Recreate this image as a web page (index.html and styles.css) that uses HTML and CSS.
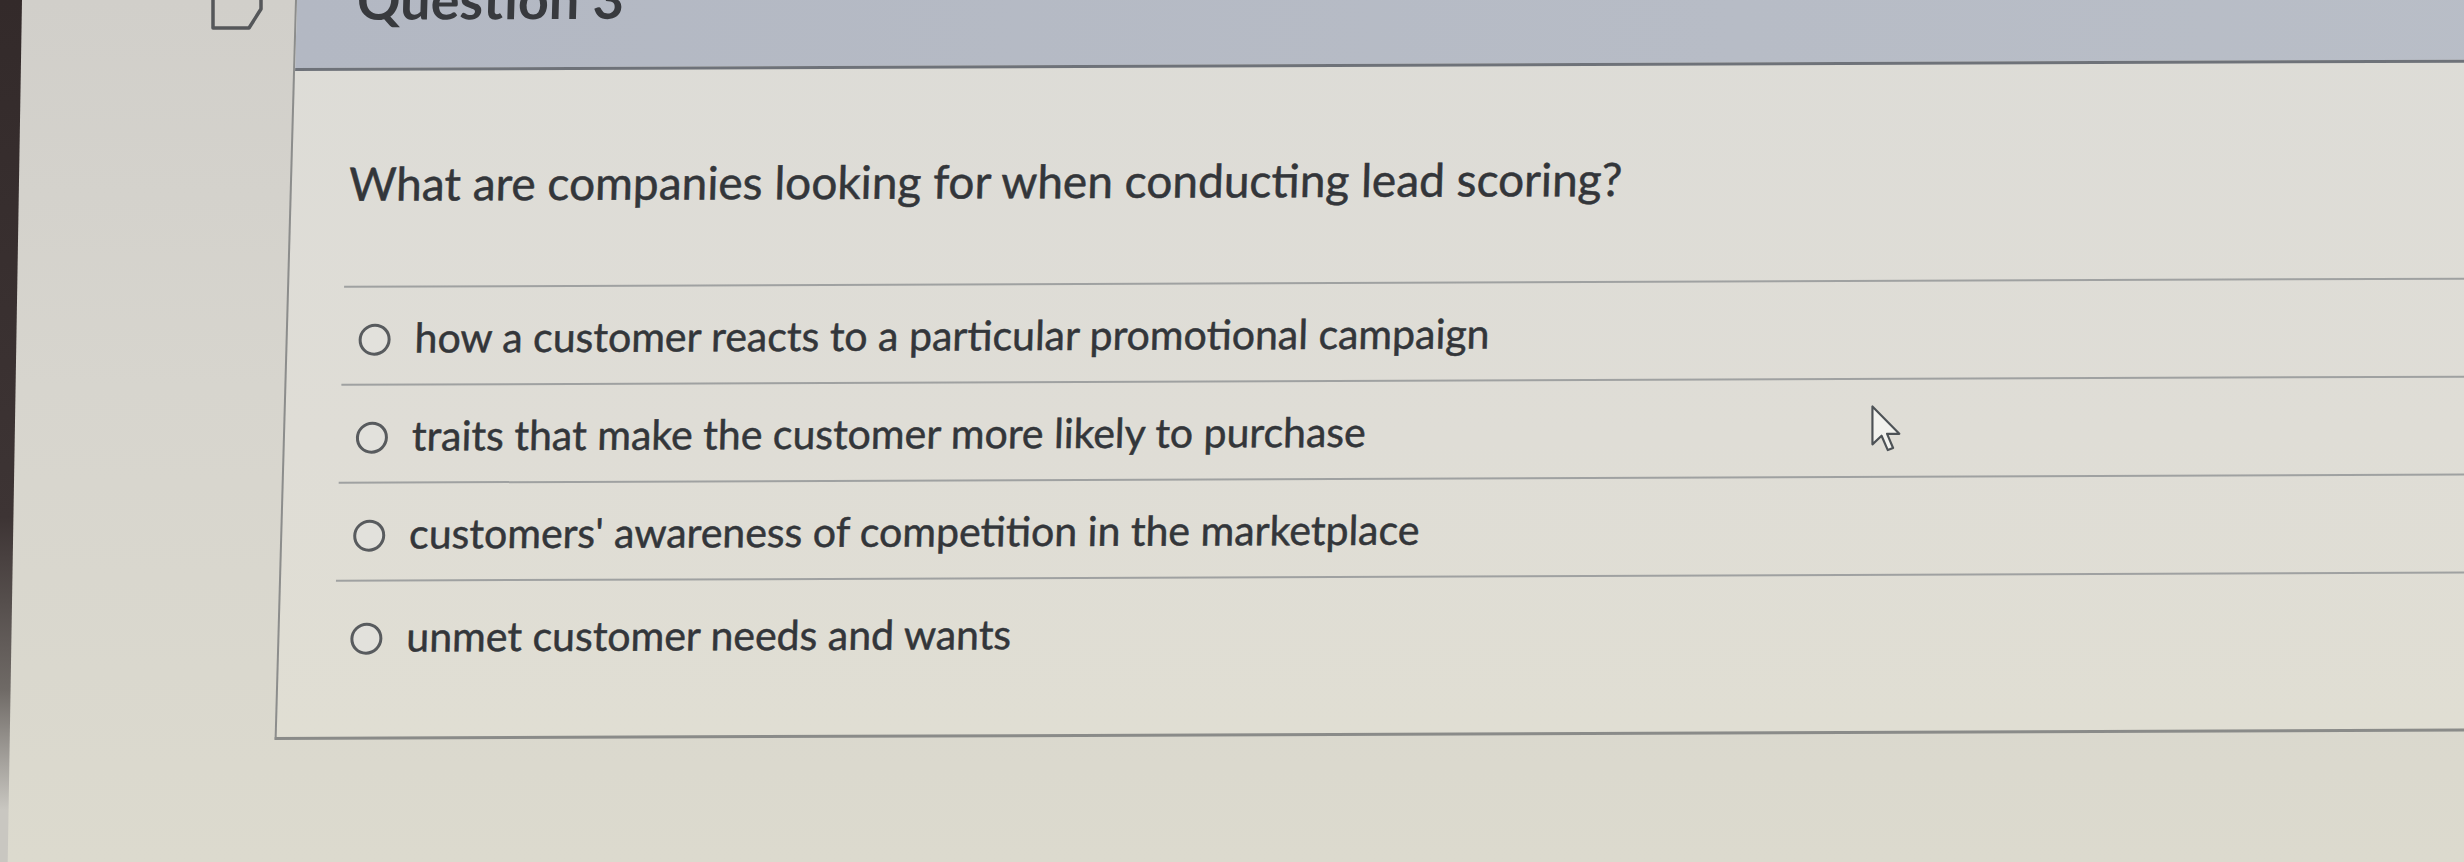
FILE: index.html
```html
<!DOCTYPE html>
<html lang="en">
<head>
<meta charset="utf-8">
<title>Question 3</title>
<link rel="stylesheet" href="styles.css">
</head>
<body>
<div class="screen">
  <div class="edge"></div>
  <aside class="sidebar">
    <svg class="flag" width="60" height="32" viewBox="0 0 60 32" aria-hidden="true">
      <path d="M3 -10 V28 H39 L51 9 V-10" fill="none" stroke="#55575a" stroke-width="3.5" stroke-linejoin="round"/>
    </svg>
  </aside>
  <main class="panel">
    <header class="qheader">
      <h2 class="qname">Question 3</h2>
    </header>
    <section class="qbody">
      <p class="qtext">What are companies looking for when conducting lead scoring?</p>
      <div class="answers">
        <label class="answer"><span class="radio"></span><span class="atext">how a customer reacts to a particular promotional campaign</span></label>
        <label class="answer"><span class="radio"></span><span class="atext">traits that make the customer more likely to purchase</span></label>
        <label class="answer"><span class="radio"></span><span class="atext">customers' awareness of competition in the marketplace</span></label>
        <label class="answer last"><span class="radio"></span><span class="atext">unmet customer needs and wants</span></label>
      </div>
    </section>
  </main>
</div>
<svg class="cursor" width="30" height="48" viewBox="0 0 12.5 20" aria-hidden="true">
  <path d="M0.6 0.6 V16.4 L4.4 12.8 L7 18.8 L9.2 17.9 L6.7 12 H11.8 Z" fill="#f2f2ee" stroke="#4d5256" stroke-width="0.9" stroke-linejoin="round"/>
</svg>
</body>
</html>
```
FILE: styles.css
```css
html, body {
  margin: 0;
  padding: 0;
  width: 2464px;
  height: 862px;
  overflow: hidden;
}
body {
  background: linear-gradient(180deg, #d1cfca 0%, #d7d5ce 45%, #dcdace 100%);
  font-family: Lato, "Open Sans", "Liberation Sans", sans-serif;
  color: #33363a;
  position: relative;
}
.screen {
  display: flex;
  height: 862px;
}
.edge {
  width: 22px;
  flex: none;
  background: linear-gradient(180deg, #332a2a 0%, #3d3434 60%, #6f6a66 80%, #c9c7c1 94%);
  clip-path: polygon(0 0, 100% 0, 35% 100%, 0 100%);
}
.sidebar {
  width: 273px;
  flex: none;
}
.flag {
  display: block;
  margin-left: 188px;
}
.panel {
  flex: none;
  width: 2400px;
  height: 737px;
  background: linear-gradient(180deg, #dddcd7 0%, #dfddd6 60%, #e0ded3 100%);
  border-left: 2px solid #8c8d8c;
  border-bottom: 3px solid #8a8b89;
  transform-origin: 0 0;
  transform: skewX(-1.8deg) rotate(-0.22deg);
  overflow: hidden;
}
.qheader {
  height: 68px;
  background: linear-gradient(90deg, #b3b8c3 0%, #b7bcc6 60%, #b9bec7 100%);
  border-bottom: 3px solid #6e7279;
  overflow: hidden;
}
.qname {
  margin: -27px 0 0 60px;
  font-size: 54px;
  line-height: 54px;
  font-weight: 700;
  color: #383a3e;
}
.qbody {
  padding-left: 55px;
}
.qtext {
  margin: 88px 0 0 0;
  font-size: 46px;
  line-height: 50px;
  height: 50px;
  padding: 0 0 77px 2px;
  border-bottom: 2px solid #9fa1a1;
  -webkit-text-stroke: 0.5px #33363a;
}
.answers {
  display: flex;
  flex-direction: column;
}
.answer {
  display: flex;
  align-items: center;
  padding: 30px 0 26px 16px;
  border-bottom: 2px solid #9fa1a1;
  font-size: 41px;
  line-height: 40px;
  -webkit-text-stroke: 0.5px #33363a;
}
.answer.last {
  border-bottom: none;
  padding-top: 35px;
}
.radio {
  width: 26px;
  height: 26px;
  border: 3.5px solid #585b5e;
  border-radius: 50%;
  background: #e2e1dc;
  margin-top: 4px;
  margin-right: 24px;
  flex: none;
}
.cursor {
  position: absolute;
  left: 1871px;
  top: 405px;
}
```
